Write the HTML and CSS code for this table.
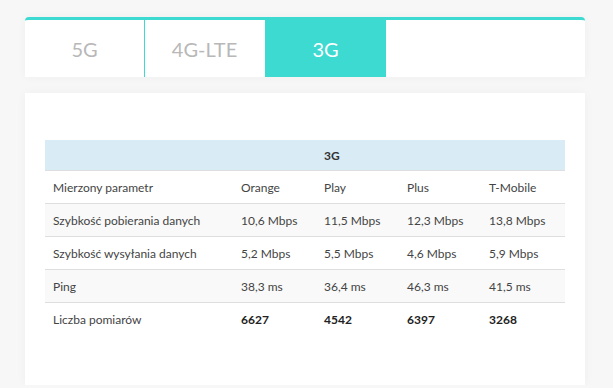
FILE: index.html
```html
<!DOCTYPE html>
<html lang="pl">
<head>
<meta charset="utf-8">
<link rel="stylesheet" href="styles.css">
</head>
<body>
<div class="page">
  <div class="tabs-card">
    <div class="tab">5G</div>
    <div class="tab">4G-LTE</div>
    <div class="tab active">3G</div>
  </div>
  <div class="table-card">
    <table class="results">
      <colgroup>
        <col class="c1"><col class="c2"><col class="c3"><col class="c4"><col class="c5">
      </colgroup>
      <thead>
        <tr class="head"><th></th><th></th><th>3G</th><th></th><th></th></tr>
      </thead>
      <tbody>
        <tr><td>Mierzony parametr</td><td>Orange</td><td>Play</td><td>Plus</td><td>T-Mobile</td></tr>
        <tr class="alt"><td>Szybkość pobierania danych</td><td>10,6 Mbps</td><td>11,5 Mbps</td><td>12,3 Mbps</td><td>13,8 Mbps</td></tr>
        <tr><td>Szybkość wysyłania danych</td><td>5,2 Mbps</td><td>5,5 Mbps</td><td>4,6 Mbps</td><td>5,9 Mbps</td></tr>
        <tr class="alt"><td>Ping</td><td>38,3 ms</td><td>36,4 ms</td><td>46,3 ms</td><td>41,5 ms</td></tr>
        <tr class="total"><td>Liczba pomiarów</td><td>6627</td><td>4542</td><td>6397</td><td>3268</td></tr>
      </tbody>
    </table>
  </div>
</div>
</body>
</html>
```
FILE: styles.css
```css
html, body {
  margin: 0;
  padding: 0;
  background: #f7f7f7;
  font-family: Lato, "Open Sans", sans-serif;
}
.page {
  padding: 17px 28px 0 25px;
  display: flex;
  flex-direction: column;
  gap: 16px;
}
.tabs-card {
  display: flex;
  background: #fff;
  border-top: 3px solid #3cdad1;
  border-radius: 4px 4px 0 0;
  height: 57px;
  box-shadow: 0 0 10px rgba(0,0,0,0.04);
}
.tab {
  width: 119px;
  border-right: 1px solid #3cdad1;
  display: flex;
  align-items: center;
  justify-content: center;
  font-size: 20px;
  color: #b8b8b8;
}
.tab:nth-child(2) {
  border-right-color: #fff;
}
.tab.active {
  background: #3cdad1;
  color: #fff;
  width: 121px;
  border-right: 0;
}
.table-card {
  background: #fff;
  padding: 47px 20px 50px 20px;
  box-shadow: 0 0 10px rgba(0,0,0,0.04);
}
.results {
  width: 100%;
  border-collapse: collapse;
  font-size: 12px;
  color: #444;
}
.c1 { width: 188px; }
.c2 { width: 83px; }
.c3 { width: 83px; }
.c4 { width: 82px; }
.head th {
  background: #d9ebf5;
  height: 30px;
  padding: 0 8px;
  text-align: left;
  font-weight: bold;
  color: #333;
}
.results td {
  height: 32px;
  padding: 0 8px;
  border-top: 1px solid #dedede;
}
.results tr.alt td {
  background: #f9f9f9;
}
.results tr.total td {
  font-weight: bold;
  color: #222;
}
.results tr.total td:first-child {
  font-weight: normal;
  color: #444;
}
```
